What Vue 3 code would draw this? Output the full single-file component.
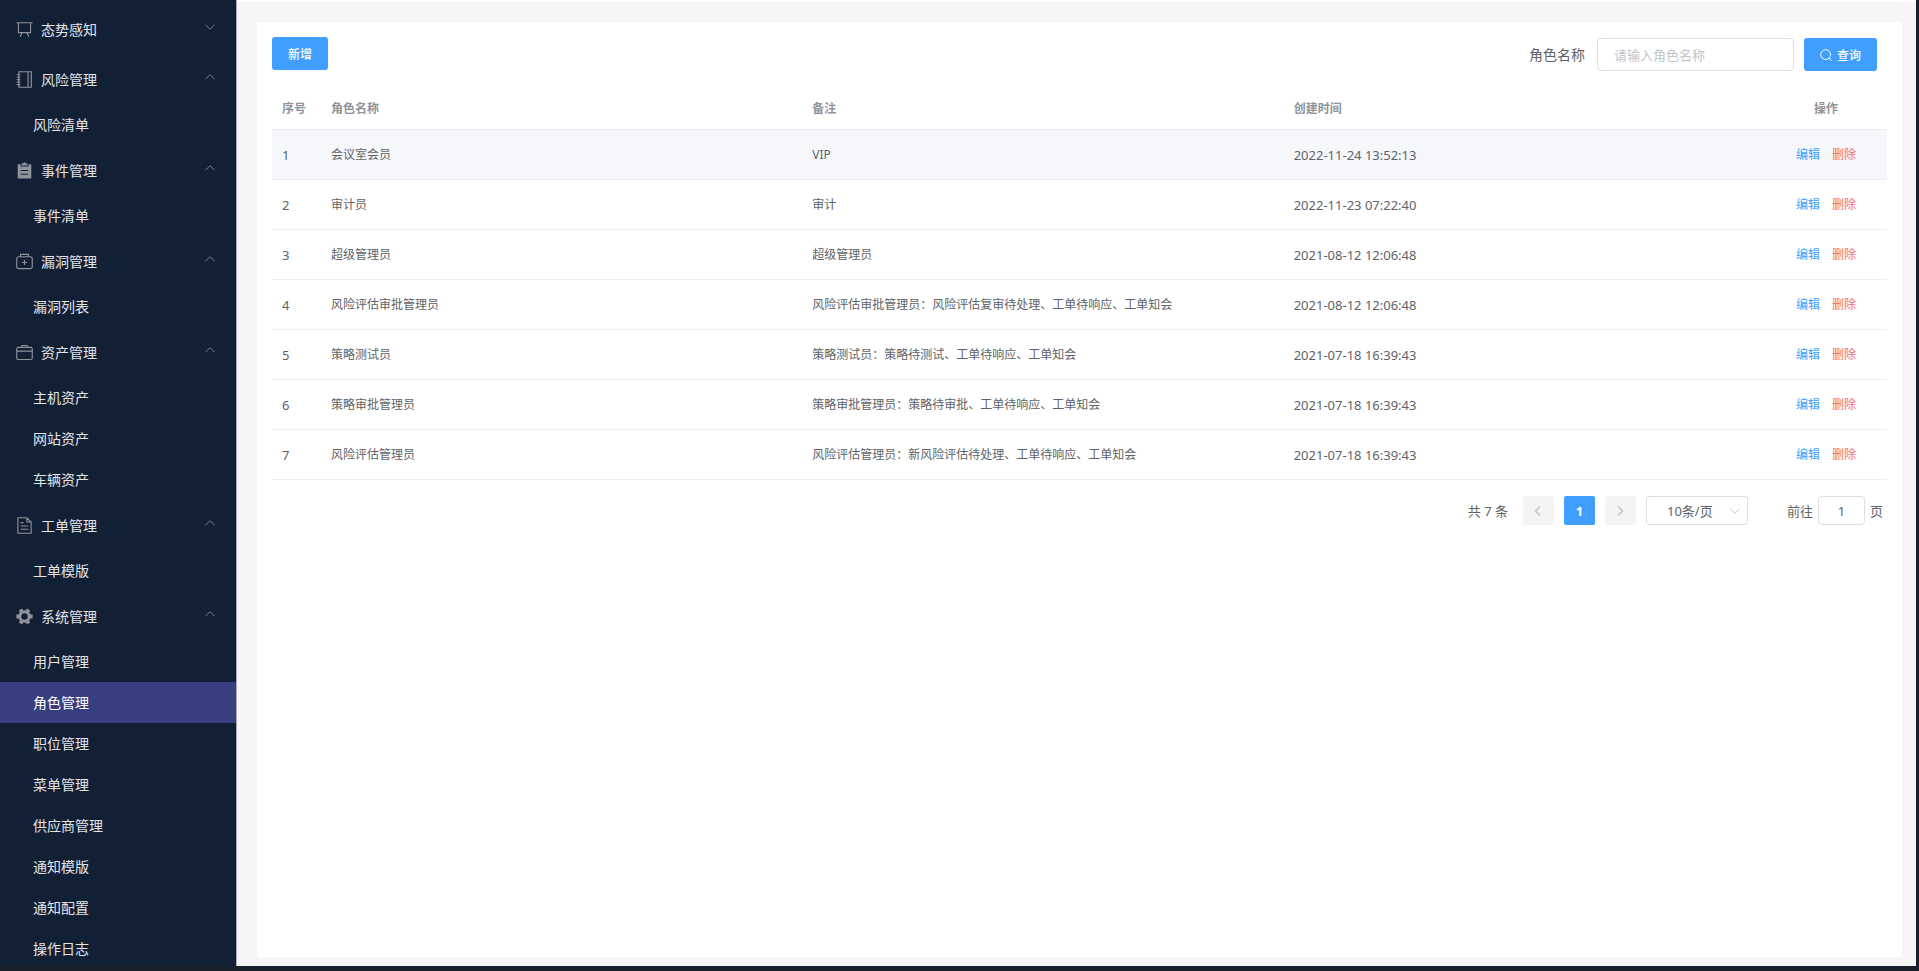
<script setup>
import { ref } from 'vue'

const groups = [
  { title: '态势感知', icon: 'board', open: false, items: [] },
  { title: '风险管理', icon: 'notebook', open: true, items: ['风险清单'] },
  { title: '事件管理', icon: 'clipboard', open: true, items: ['事件清单'] },
  { title: '漏洞管理', icon: 'medkit', open: true, items: ['漏洞列表'] },
  { title: '资产管理', icon: 'briefcase', open: true, items: ['主机资产', '网站资产', '车辆资产'] },
  { title: '工单管理', icon: 'document', open: true, items: ['工单模版'] },
  {
    title: '系统管理',
    icon: 'gear',
    open: true,
    items: ['用户管理', '角色管理', '职位管理', '菜单管理', '供应商管理', '通知模版', '通知配置', '操作日志'],
  },
]
const active = ref('角色管理')

const rows = [
  { name: '会议室会员', remark: 'VIP', time: '2022-11-24 13:52:13' },
  { name: '审计员', remark: '审计', time: '2022-11-23 07:22:40' },
  { name: '超级管理员', remark: '超级管理员', time: '2021-08-12 12:06:48' },
  { name: '风险评估审批管理员', remark: '风险评估审批管理员：风险评估复审待处理、工单待响应、工单知会', time: '2021-08-12 12:06:48' },
  { name: '策略测试员', remark: '策略测试员：策略待测试、工单待响应、工单知会', time: '2021-07-18 16:39:43' },
  { name: '策略审批管理员', remark: '策略审批管理员：策略待审批、工单待响应、工单知会', time: '2021-07-18 16:39:43' },
  { name: '风险评估管理员', remark: '风险评估管理员：新风险评估待处理、工单待响应、工单知会', time: '2021-07-18 16:39:43' },
]
const keyword = ref('')
const page = ref('1')
</script>

<template>
  <div class="layout">
    <nav class="sidebar">
      <section v-for="g in groups" :key="g.title">
        <button type="button" class="group-title" :aria-expanded="g.open">
          <svg class="icon" viewBox="0 0 18 18" fill="none" stroke="currentColor" stroke-width="1.2" aria-hidden="true">
            <template v-if="g.icon === 'board'">
              <path d="M.5 1.800h17M2.600 1.800v10.500h12.800V1.800M6.500 12.300l-2 4.400M11.500 12.300l2 4.400" />
            </template>
            <template v-else-if="g.icon === 'notebook'">
              <path d="M3 .8h13.200v16.400H3zM12.800.8v16.400" />
              <path d="M.8 4h3.800M.8 6.600h3.800M.8 9.200h3.800M.8 11.800h3.800M.8 14.400h3.800" />
            </template>
            <template v-else-if="g.icon === 'clipboard'">
              <path d="M1.800 2.500h3v2.200h8.400V2.500h3v15H1.800z" fill="currentColor" stroke="none" />
              <path d="M5.800 1.500h1.700L8 .5h2l.5 1h1.700v2.200H5.800z" fill="currentColor" stroke="none" />
              <path class="cut" d="M5 9h8M5 13h8" />
            </template>
            <template v-else-if="g.icon === 'medkit'">
              <rect x=".8" y="4" width="16.400" height="12.600" rx="2" />
              <path d="M4.800 4V1.400h8.400V4M9 7.300v5.400M6.300 10h5.400" />
            </template>
            <template v-else-if="g.icon === 'briefcase'">
              <rect x=".8" y="3.600" width="16.400" height="12.800" rx="1.500" />
              <path d="M5.500 3.600l.8-2h5.400l.8 2M.8 7.500h16.400" />
            </template>
            <template v-else-if="g.icon === 'document'">
              <path d="M2 .8h9.500l4.500 4.500v11.900H2zM11.500.8v4.500H16M5 6h3M5 9.500h8M5 13h8" />
            </template>
            <template v-else>
              <circle cx="9" cy="9" r="5" stroke-width="3.200" />
              <path d="M.4 9h3M14.600 9h3M4.700 1.600l1.500 2.600M11.800 13.800l1.500 2.600M13.300 1.600l-1.500 2.600M6.200 13.800l-1.500 2.600" stroke-width="4" />
            </template>
          </svg>
          <span>{{ g.title }}</span>
          <svg class="arrow" :class="{ up: g.open }" viewBox="0 0 12 12" fill="none" stroke="currentColor" aria-hidden="true">
            <path d="M1.500 3.800L6 8.300l4.500-4.500" />
          </svg>
        </button>
        <ul v-if="g.open" class="submenu">
          <li v-for="item in g.items" :key="item">
            <a href="#" :class="{ active: item === active }" @click.prevent="active = item">{{ item }}</a>
          </li>
        </ul>
      </section>
    </nav>

    <main class="content">
      <div class="card">
        <div class="toolbar">
          <button type="button" class="btn">新增</button>
          <form class="search" @submit.prevent>
            <label for="role-name">角色名称</label>
            <input id="role-name" v-model="keyword" type="text" placeholder="请输入角色名称" />
            <button type="submit" class="btn">
              <svg viewBox="0 0 12 12" fill="none" stroke="currentColor" aria-hidden="true">
                <circle cx="5.600" cy="5.600" r="4.900" />
                <path d="M9 9l2.500 2.500" />
              </svg>
              查询
            </button>
          </form>
        </div>

        <table>
          <colgroup>
            <col class="col-index" />
            <col />
            <col />
            <col />
            <col class="col-ops" />
          </colgroup>
          <thead>
            <tr>
              <th>序号</th>
              <th>角色名称</th>
              <th>备注</th>
              <th>创建时间</th>
              <th class="ops">操作</th>
            </tr>
          </thead>
          <tbody>
            <tr v-for="(r, i) in rows" :key="r.name" :class="{ hover: i === 0 }">
              <td class="num">{{ i + 1 }}</td>
              <td>{{ r.name }}</td>
              <td>{{ r.remark }}</td>
              <td class="num">{{ r.time }}</td>
              <td class="ops">
                <div class="links">
                  <button type="button" class="link">编辑</button>
                  <button type="button" class="link danger">删除</button>
                </div>
              </td>
            </tr>
          </tbody>
        </table>

        <div class="pagination">
          <span class="total">共 7 条</span>
          <div class="pager">
            <button type="button" disabled aria-label="上一页">
              <svg viewBox="0 0 12 12" fill="none" stroke="currentColor" stroke-width="1.500"><path d="M8 1.500L3.500 6 8 10.500" /></svg>
            </button>
            <button type="button" class="current">1</button>
            <button type="button" disabled aria-label="下一页">
              <svg viewBox="0 0 12 12" fill="none" stroke="currentColor" stroke-width="1.500"><path d="M4 1.500L8.500 6 4 10.500" /></svg>
            </button>
          </div>
          <div class="size">
            <select aria-label="每页条数">
              <option>10条/页</option>
            </select>
            <svg viewBox="0 0 12 12" fill="none" stroke="currentColor" aria-hidden="true"><path d="M1.500 3.800L6 8.300l4.500-4.500" /></svg>
          </div>
          <div class="jump">
            <label for="jump-page">前往</label>
            <input id="jump-page" v-model="page" type="text" />
            <span>页</span>
          </div>
        </div>
      </div>
    </main>
  </div>
</template>

<style>
body {
  background: #1a202b;
}
</style>

<style scoped>
.layout {
  display: flex;
  box-sizing: border-box;
  height: 100vh;
  padding: 0 3px 5px 0;
  overflow: hidden;
  color: #606266;
  font-family: "Noto Sans", "Noto Sans CJK SC", sans-serif;
  font-size: 12px;
}
button,
input,
select {
  box-sizing: border-box;
  margin: 0;
  font-family: inherit;
}
button {
  cursor: pointer;
}

/* sidebar */
.sidebar {
  box-sizing: border-box;
  flex: 0 0 237px;
  padding-top: 4px;
  overflow: hidden;
  border-right: 1px solid #a9adb8;
  background: #122036;
}
.group-title {
  display: flex;
  align-items: center;
  width: 100%;
  height: 50px;
  padding: 0 20px 0 16px;
  border: 0;
  background: none;
  color: #e2e4e8;
  font-size: 14px;
}
.icon {
  width: 17px;
  height: 17px;
  margin-right: 8px;
  color: #909399;
}
.icon .cut {
  stroke: #122036;
}
.arrow {
  width: 12px;
  height: 12px;
  margin: 0 0 4px auto;
  color: #7d828c;
}
.arrow.up {
  transform: rotate(180deg);
}
.submenu {
  margin: 0;
  padding: 0;
  list-style: none;
}
.submenu a {
  display: block;
  height: 41px;
  padding-left: 33px;
  color: #e2e4e8;
  font-size: 14px;
  line-height: 41px;
  text-decoration: none;
}
.submenu a.active {
  background: #383f80;
  color: #fff;
}

/* content */
.content {
  display: flex;
  flex: 1;
  min-width: 0;
  padding: 20px 14px 9px 20px;
  border-top: 2px solid #fff;
  background: #f6f6f6;
}
.card {
  flex: 1;
  min-width: 0;
  padding: 15px;
  background: #fff;
}
.toolbar {
  display: flex;
  align-items: flex-start;
  justify-content: space-between;
}
.btn {
  display: flex;
  align-items: center;
  gap: 5px;
  height: 33px;
  padding: 0 16px;
  border: 0;
  border-radius: 3px;
  background: #409eff;
  color: #fff;
  font-size: 12px;
  font-weight: 500;
}
.btn svg {
  width: 12px;
  height: 12px;
}
.search {
  display: flex;
  align-items: center;
  margin: 1px 10px 0 0;
}
.search label {
  margin-right: 12px;
  padding-bottom: 2px;
  font-size: 14px;
}
.search input {
  width: 197px;
  height: 33px;
  margin-right: 10px;
  padding: 0 16px;
  border: 1px solid #dcdfe6;
  border-radius: 4px;
  background: #fff;
  color: #606266;
  font-size: 13px;
}
.search input::placeholder {
  color: #c0c4cc;
}

/* table */
table {
  width: 100%;
  margin-top: 18px;
  border-spacing: 0;
  table-layout: fixed;
}
.col-index {
  width: 49px;
}
.col-ops {
  width: 122px;
}
th,
td {
  box-sizing: border-box;
  padding: 0 10px;
  border-bottom: 1px solid #ebeef5;
  line-height: 18px;
  text-align: left;
}
th {
  height: 41px;
  color: #909399;
  font-weight: 700;
}
td {
  height: 50px;
}
.num {
  font-size: 13px;
}
tr.hover td {
  background: #f5f7fa;
}
.ops {
  text-align: center;
}
.links {
  display: flex;
  justify-content: center;
  gap: 12px;
}
.link {
  padding: 0;
  border: 0;
  background: none;
  color: #409eff;
  font-size: 12px;
  line-height: 18px;
}
.link.danger {
  color: #f56c6c;
}

/* pagination */
.pagination {
  display: flex;
  align-items: center;
  justify-content: flex-end;
  margin-top: 16px;
  padding-right: 4px;
  font-size: 13px;
}
.pager {
  display: flex;
  gap: 10px;
  margin: 0 10px 0 15px;
}
.pager button {
  display: flex;
  align-items: center;
  justify-content: center;
  width: 31px;
  height: 29px;
  padding: 0;
  border: 0;
  border-radius: 2px;
  background: #f4f4f5;
  color: #c0c4cc;
  font-size: 13px;
  font-weight: 700;
}
.pager .current {
  background: #409eff;
  color: #fff;
}
.pager svg {
  width: 12px;
  height: 12px;
}
.size {
  display: grid;
  align-items: center;
  width: 102px;
}
.size select,
.size svg {
  grid-area: 1 / 1;
}
.size select {
  width: 100%;
  height: 29px;
  padding: 0 20px;
  appearance: none;
  border: 1px solid #dcdfe6;
  border-radius: 3px;
  background: #fff;
  color: #606266;
  font-size: 13px;
}
.size svg {
  justify-self: end;
  width: 12px;
  height: 12px;
  margin-right: 7px;
  color: #c0c4cc;
  pointer-events: none;
}
.jump {
  display: flex;
  align-items: center;
  gap: 5px;
  margin-left: 39px;
}
.jump input {
  width: 47px;
  height: 29px;
  padding: 0 3px;
  border: 1px solid #dcdfe6;
  border-radius: 4px;
  background: #fff;
  color: #606266;
  font-size: 13px;
  text-align: center;
}
</style>
